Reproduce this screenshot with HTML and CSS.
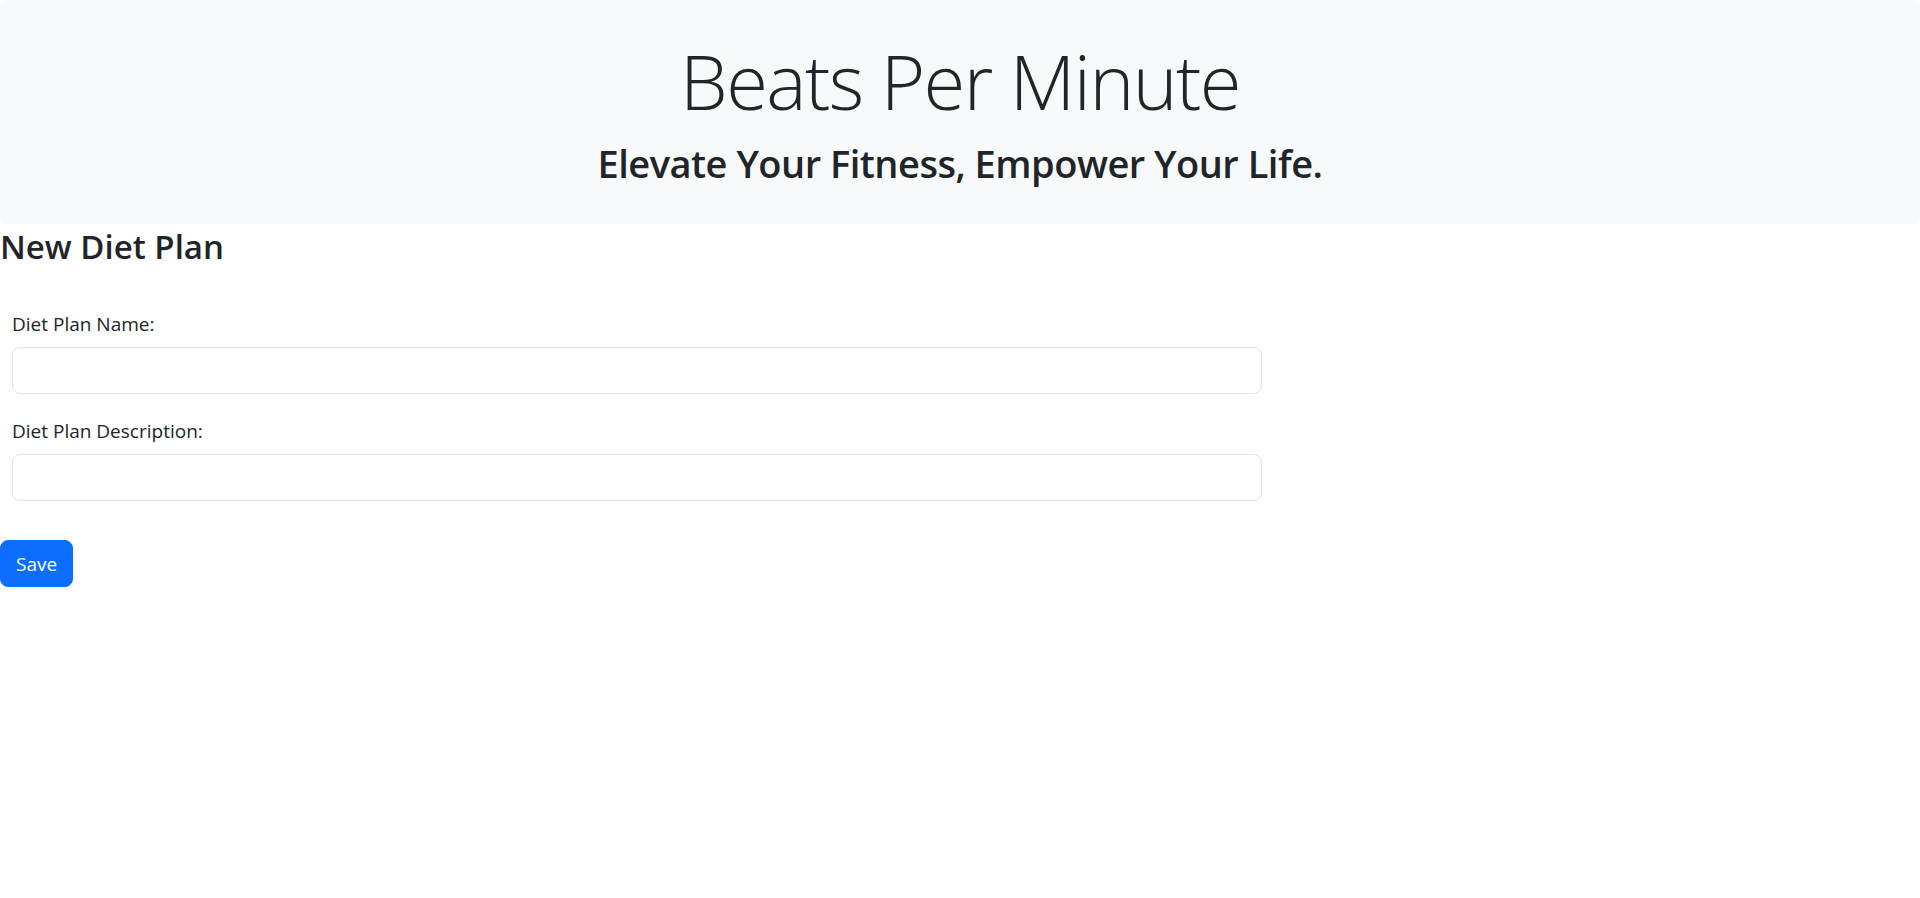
FILE: index.html
```html
<!DOCTYPE html>
<html lang="en">
<head>
<meta charset="utf-8">
<title>Beats Per Minute - New Diet Plan</title>
<link rel="stylesheet" href="styles.css">
</head>
<body>
<header class="hero">
  <h1 class="hero-title">Beats Per Minute</h1>
  <p class="hero-tagline">Elevate Your Fitness, Empower Your Life.</p>
</header>
<main class="page">
  <h2 class="page-title">New Diet Plan</h2>
  <form class="plan-form">
    <div class="field">
      <label class="field-label" for="name">Diet Plan Name:</label>
      <input class="field-input" id="name" type="text">
    </div>
    <div class="field">
      <label class="field-label" for="desc">Diet Plan Description:</label>
      <input class="field-input" id="desc" type="text">
    </div>
    <button class="btn-save" type="button">Save</button>
  </form>
</main>
</body>
</html>
```
FILE: styles.css
```css
* { box-sizing: border-box; }
html, body { margin: 0; padding: 0; }
body {
  font-family: "Open Sans", "Noto Sans", sans-serif;
  color: #212529;
  background: #fff;
}
.hero {
  background: #f8f9fa;
  border-radius: 8px;
  height: 224px;
  padding-top: 33px;
  text-align: center;
}
.hero-title {
  margin: 0;
  font-size: 76px;
  line-height: 96px;
  font-weight: 300;
  letter-spacing: -1.6px;
}
.hero-tagline {
  margin: 10px 0 0;
  font-size: 38px;
  line-height: 48px;
  font-weight: 600;
  letter-spacing: -0.5px;
}
.page-title {
  margin: 3px 0 0;
  font-size: 33px;
  line-height: 39px;
  font-weight: 600;
}
.plan-form {
  padding-top: 43px;
  display: flex;
  flex-direction: column;
  align-items: flex-start;
}
.field {
  width: 1250px;
  margin-left: 12px;
  display: flex;
  flex-direction: column;
  margin-bottom: 22px;
}
.field-label {
  font-size: 19px;
  line-height: 30px;
  margin-bottom: 8px;
}
.field-input {
  height: 47px;
  border: 1px solid #dee2e6;
  border-radius: 8px;
  font: inherit;
  font-size: 19px;
  padding: 8px 16px;
  background: #fff;
}
.btn-save {
  margin-top: 17px;
  height: 47px;
  padding: 0 15px;
  background: #0d6efd;
  color: #fff;
  border: 1px solid #0d6efd;
  border-radius: 8px;
  font: inherit;
  font-size: 19px;
  line-height: 30px;
}
```
